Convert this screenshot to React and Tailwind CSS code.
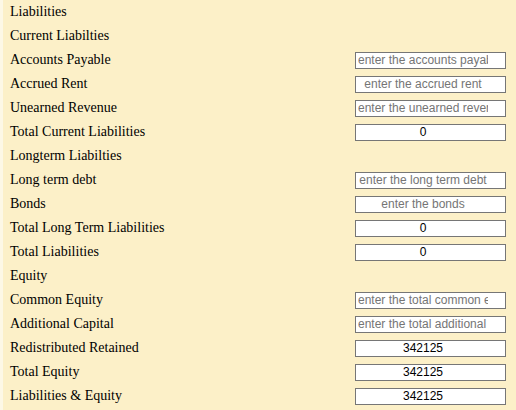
const rows = [
  { label: "Liabilities" },
  { label: "Current Liabilties" },
  { label: "Accounts Payable", placeholder: "enter the accounts payable" },
  { label: "Accrued Rent", placeholder: "enter the accrued rent" },
  { label: "Unearned Revenue", placeholder: "enter the unearned revenue" },
  { label: "Total Current Liabilities", value: "0" },
  { label: "Longterm Liabilties" },
  { label: "Long term debt", placeholder: "enter the long term debt" },
  { label: "Bonds", placeholder: "enter the bonds" },
  { label: "Total Long Term Liabilities", value: "0" },
  { label: "Total Liabilities", value: "0" },
  { label: "Equity" },
  { label: "Common Equity", placeholder: "enter the total common equity" },
  { label: "Additional Capital", placeholder: "enter the total additional capital" },
  { label: "Redistributed Retained", value: "342125" },
  { label: "Total Equity", value: "342125" },
  { label: "Liabilities & Equity", value: "342125" },
];

export default function App() {
  return (
    <div className="w-[516px] h-[410px] bg-[#fdf8e6] pl-[3px] overflow-hidden">
      <div className="h-full bg-[#fcf0c8] pl-[7px] pr-[10px] font-['Liberation_Serif',serif] text-[14px] text-black">
        {rows.map((r) => (
          <div key={r.label} className="h-6 flex items-center justify-between">
            <span className="leading-none">{r.label}</span>
            {(r.placeholder || r.value) && (
              <input
                type="text"
                readOnly={!!r.value}
                defaultValue={r.value}
                placeholder={r.placeholder}
                className="w-[151px] h-[17px] border border-[#767676] bg-white pl-[2px] pr-[17px] text-center font-['Liberation_Sans',Arial,sans-serif] text-[12px] text-black placeholder:text-[#757575] outline-none"
              />
            )}
          </div>
        ))}
      </div>
    </div>
  );
}
